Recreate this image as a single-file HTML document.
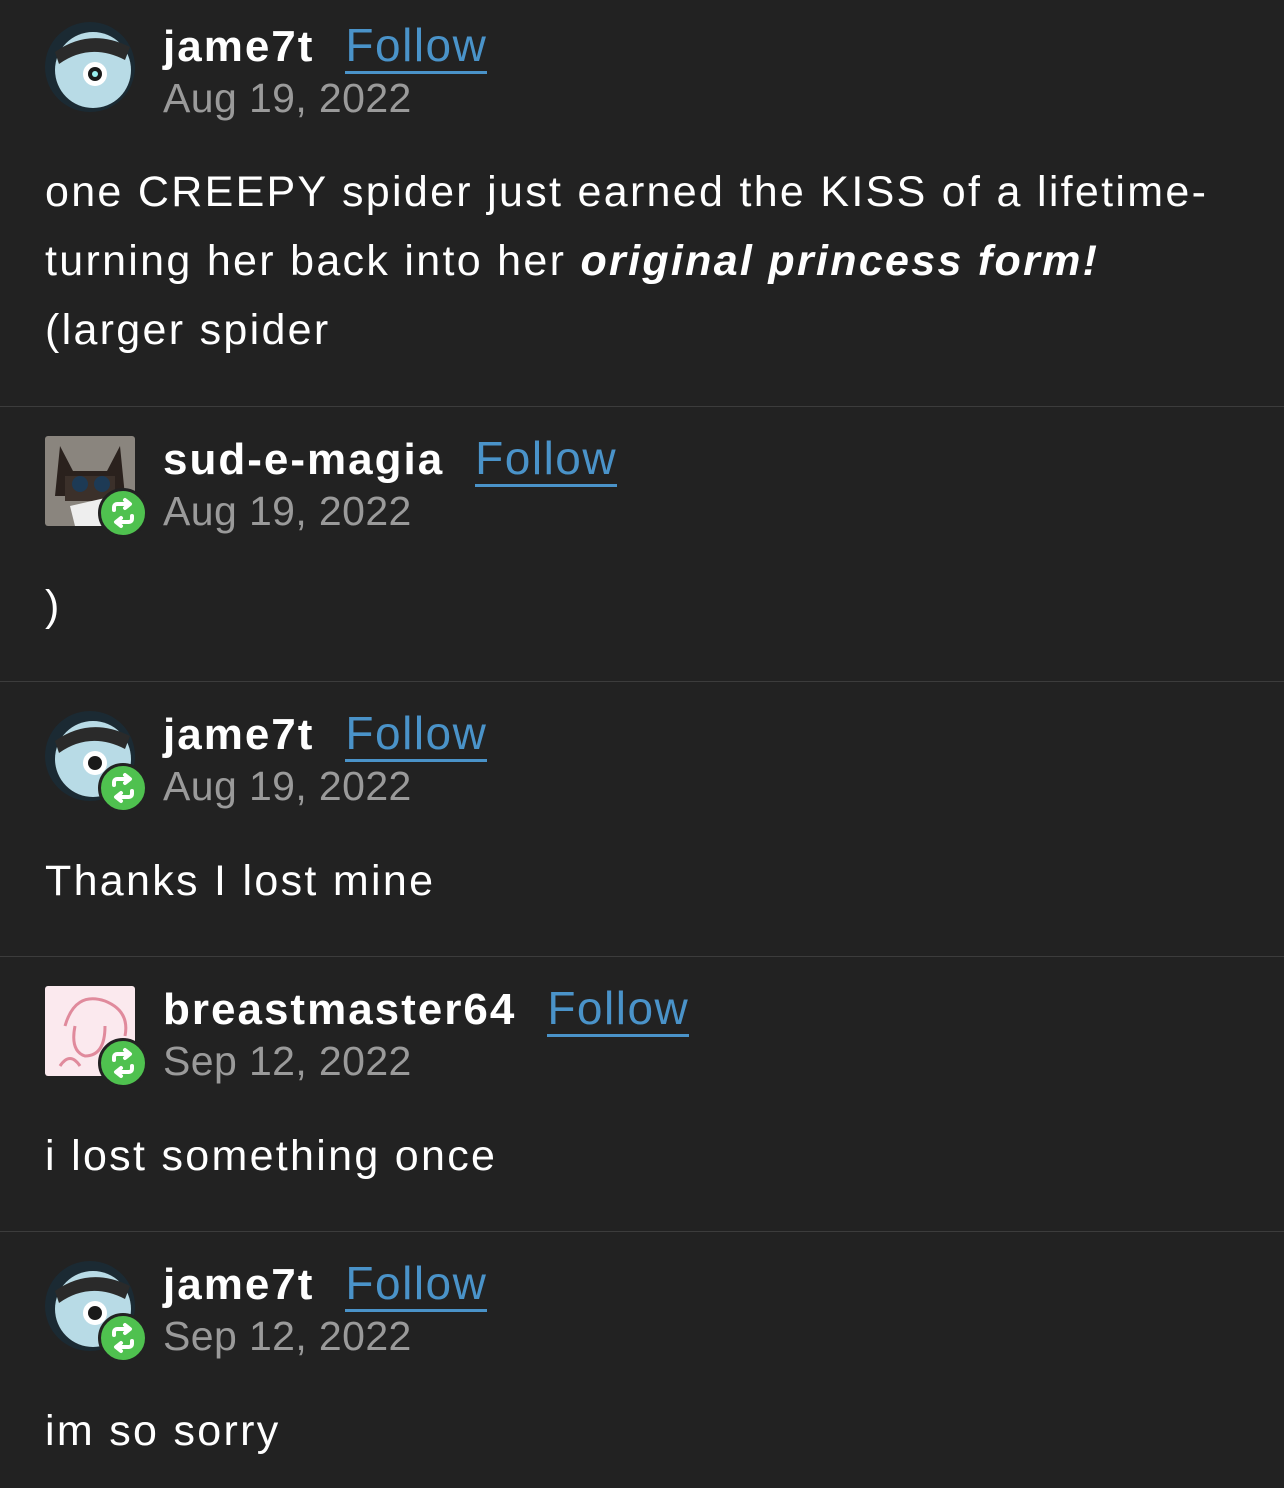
<!DOCTYPE html>
<html><head><meta charset="utf-8"><style>
body{margin:0;width:1284px;height:1488px;background:#222222;font-family:"Liberation Sans",sans-serif;color:#fff;position:relative;overflow:hidden}
.a{position:absolute}
.av{position:absolute;left:45px;width:90px;height:90px}
.name{position:absolute;left:163px;font-size:44px;font-weight:bold;color:#fff;line-height:1;letter-spacing:2px}
.fol{color:#4a93c9;font-weight:normal;margin-left:31px;border-bottom:3px solid #4a93c9;font-size:46px;letter-spacing:1.5px}
.date{position:absolute;left:163px;font-size:41px;color:#9a9a9a;line-height:1;letter-spacing:0.4px}
.body{position:absolute;left:45px;font-size:43px;line-height:69px;color:#fff;letter-spacing:2.3px}
.sep{position:absolute;left:0;width:1284px;height:1px;background:#3c3c3c}
.badge{position:absolute;width:44px;height:44px;border-radius:50%;background:#4fc14f;border:3px solid #222}
</style></head><body>
<svg class="av" style="top:22px" viewBox="0 0 90 90"><circle cx="45" cy="45" r="45" fill="#1b2a33"/><circle cx="48" cy="48" r="38" fill="#b8dbe6"/><path d="M10 30 Q45 5 85 25 L80 38 Q45 20 14 42Z" fill="#2a2a2a"/><circle cx="50" cy="52" r="12" fill="#fff"/><circle cx="50" cy="52" r="7" fill="#1a1a1a"/><circle cx="50" cy="52" r="3" fill="#9ee"/></svg>
<div class="name" style="top:22px">jame7t<span class="fol">Follow</span></div>
<div class="date" style="top:78px">Aug 19, 2022</div>
<div class="body" style="top:158px">one CREEPY spider just earned the KISS of a lifetime-<br>turning her back into her <b><i>original princess form!</i></b><br>(larger spider</div>
<div class="sep" style="top:406px"></div>

<svg class="av" style="top:436px" viewBox="0 0 90 90"><rect width="90" height="90" rx="3" fill="#8a857e"/><path d="M15 10 L28 35 L62 35 L75 10 L80 60 L10 60Z" fill="#2a211d"/><rect x="20" y="40" width="50" height="25" fill="#3b302a"/><circle cx="35" cy="48" r="8" fill="#1d3a55"/><circle cx="57" cy="48" r="8" fill="#1d3a55"/><path d="M25 70 L60 62 L70 90 L30 90Z" fill="#eee"/></svg>
<div class="badge" style="left:98px;top:488px"></div>
<div class="name" style="top:435px">sud-e-magia<span class="fol">Follow</span></div>
<div class="date" style="top:491px">Aug 19, 2022</div>
<div class="body" style="top:572px">)</div>
<div class="sep" style="top:681px"></div>

<svg class="av" style="top:711px" viewBox="0 0 90 90"><circle cx="45" cy="45" r="45" fill="#1b2a33"/><circle cx="48" cy="48" r="38" fill="#b8dbe6"/><path d="M10 30 Q45 5 85 25 L80 38 Q45 20 14 42Z" fill="#2a2a2a"/><circle cx="50" cy="52" r="12" fill="#fff"/><circle cx="50" cy="52" r="7" fill="#1a1a1a"/></svg>
<div class="badge" style="left:98px;top:763px"></div>
<div class="name" style="top:710px">jame7t<span class="fol">Follow</span></div>
<div class="date" style="top:766px">Aug 19, 2022</div>
<div class="body" style="top:847px">Thanks I lost mine</div>
<div class="sep" style="top:956px"></div>

<svg class="av" style="top:986px" viewBox="0 0 90 90"><rect width="90" height="90" rx="3" fill="#fbe9ee"/><path d="M20 40 Q30 5 60 15 Q85 25 80 50 M30 40 Q25 65 40 70 Q60 70 60 40 M15 80 Q25 65 35 80" stroke="#e08a9c" stroke-width="3" fill="none"/></svg>
<div class="badge" style="left:98px;top:1038px"></div>
<div class="name" style="top:985px">breastmaster64<span class="fol">Follow</span></div>
<div class="date" style="top:1041px">Sep 12, 2022</div>
<div class="body" style="top:1122px">i lost something once</div>
<div class="sep" style="top:1231px"></div>

<svg class="av" style="top:1261px" viewBox="0 0 90 90"><circle cx="45" cy="45" r="45" fill="#1b2a33"/><circle cx="48" cy="48" r="38" fill="#b8dbe6"/><path d="M10 30 Q45 5 85 25 L80 38 Q45 20 14 42Z" fill="#2a2a2a"/><circle cx="50" cy="52" r="12" fill="#fff"/><circle cx="50" cy="52" r="7" fill="#1a1a1a"/></svg>
<div class="badge" style="left:98px;top:1313px"></div>
<div class="name" style="top:1260px">jame7t<span class="fol">Follow</span></div>
<div class="date" style="top:1316px">Sep 12, 2022</div>
<div class="body" style="top:1397px">im so sorry</div>

<svg width="0" height="0" style="position:absolute"><defs><g id="r"><path d="M13 19 v-3 a3 3 0 0 1 3-3 h12 M24 9 l5 4 -5 4 M31 25 v3 a3 3 0 0 1 -3 3 h-12 M20 27 l-5 4 5 4" stroke="#fff" stroke-width="4" fill="none" stroke-linecap="round" stroke-linejoin="round"/></g></defs></svg>
<svg class="a" style="left:101px;top:491px" width="44" height="44"><use href="#r"/></svg>
<svg class="a" style="left:101px;top:766px" width="44" height="44"><use href="#r"/></svg>
<svg class="a" style="left:101px;top:1041px" width="44" height="44"><use href="#r"/></svg>
<svg class="a" style="left:101px;top:1316px" width="44" height="44"><use href="#r"/></svg>
</body></html>
